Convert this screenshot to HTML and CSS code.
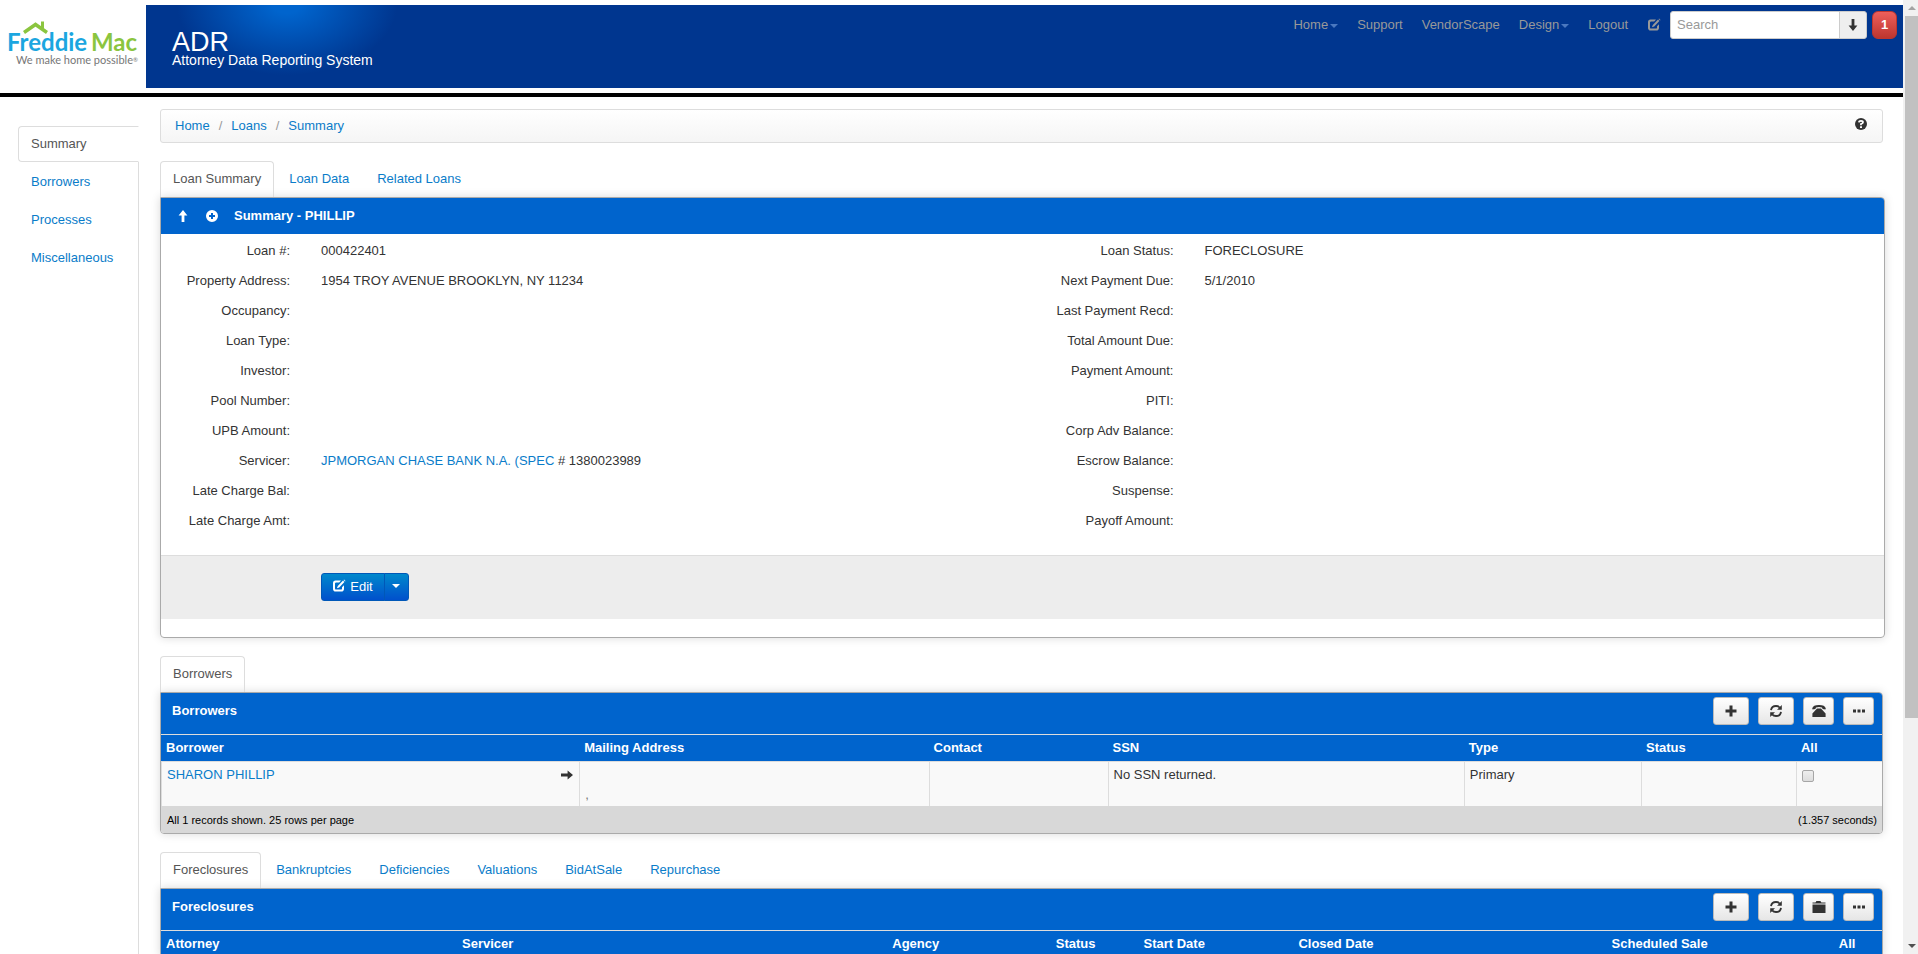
FILE: index.html
```html
<!DOCTYPE html>
<html lang="en">
<head>
    <meta charset="UTF-8">
    <meta name="viewport" content="width=device-width, initial-scale=1.0">
    <title>ADR - Attorney Data Reporting System</title>
    <link rel="stylesheet" href="styles.css">
</head>
<body>
    <!-- Icon sprite -->
    <svg class="sprite" aria-hidden="true">
        <symbol id="icon-edit" viewBox="0 0 14 14"><path fill="currentColor" d="M3.5 1.5H9L7.2 3.4H4.2Q3 3.4 3 4.6v4.8q0 1.2 1.2 1.2h4.6q1.2 0 1.2-1.2V8.2l2-2v3.6Q12 12.6 9.2 12.6H3.8Q1 12.6 1 9.8V4.2Q1 1.5 3.5 1.5zM11 1.6l1.4 1.4-5.2 5.4-2.3.9.9-2.4zM11.6 1l.5-.5 1.4 1.4-.5.5z"/></symbol>
        <symbol id="icon-down" viewBox="0 0 14 14"><path fill="currentColor" d="M5.6 1h2.8v6.6h3L7 13 2.6 7.6h3z"/></symbol>
        <symbol id="icon-up" viewBox="0 0 14 14"><path fill="currentColor" d="M5.6 13h2.8V6.4h3L7 1 2.6 6.4h3z"/></symbol>
        <symbol id="icon-right" viewBox="0 0 14 14"><path fill="currentColor" d="M1 5.6v2.8h6.6v3L13 7 7.6 2.6v3z"/></symbol>
        <symbol id="icon-plus-sign" viewBox="0 0 14 14"><path fill="currentColor" fill-rule="evenodd" d="M7 1a6 6 0 1 0 0 12A6 6 0 0 0 7 1zM6 4h2v2h2v2H8v2H6V8H4V6h2z"/></symbol>
        <symbol id="icon-question" viewBox="0 0 14 14"><circle cx="7" cy="7" r="6" fill="currentColor"/><path fill="none" stroke="#fff" stroke-width="1.8" d="M4.9 5.4Q5 3.8 7 3.8t2 1.5Q9 6.3 7 7v1.2"/><path fill="#fff" d="M6 9.2h2v1.7H6z"/></symbol>
        <symbol id="icon-plus" viewBox="0 0 14 14"><path fill="currentColor" d="M5.5 1.5h3v4h4v3h-4v4h-3v-4h-4v-3h4z"/></symbol>
        <symbol id="icon-refresh" viewBox="0 0 14 14"><path fill="none" stroke="currentColor" stroke-width="1.8" d="M2 6.2C2.4 3.6 4.6 2 7 2q2.4 0 3.9 1.7M12 7.8C11.6 10.4 9.4 12 7 12q-2.4 0-3.9-1.7"/><path fill="currentColor" d="M12.8 1v4.8H8zM1.2 13V8.2H6z"/></symbol>
        <symbol id="icon-phone" viewBox="0 0 14 14"><path fill="currentColor" d="M.2 4.4Q1 1 7 1t6.8 3.4l-.4 1-2.8-.3-.6-1.7Q7 2.6 4 3.4l-.6 1.7-2.8.3zM5 4.4h4l4.600 5V13H.4V9.400z"/></symbol>
        <symbol id="icon-folder" viewBox="0 0 14 14"><path fill="currentColor" d="M.5 3.500V2.400h3L4.400 1h4l1 1.400h4.100v1.100zM.5 4.500h13V13H.5z"/></symbol>
        <symbol id="icon-more" viewBox="0 0 14 14"><path fill="currentColor" d="M1 5.500h3v3H1zM5.500 5.500h3v3h-3zM10 5.500h3v3h-3z"/></symbol>
    </svg>

    <div class="window">
        <div class="page">
            <header class="header">
                <a href="#" class="logo" aria-label="Freddie Mac">
                    <svg width="146" height="83" viewBox="0 0 146 83">
                        <path d="M24 27.500l11.500-8 11.500 8" fill="none" stroke="#8bc53f" stroke-width="3.500"/>
                        <path d="M41 16.500h3v8l-3-2z" fill="#8bc53f"/>
                        <text x="7" y="46" class="logo-blue">Freddie</text>
                        <text x="91" y="46" class="logo-green">Mac</text>
                        <text x="16" y="59" class="logo-tag">We make home possible<tspan class="logo-reg" dy="-2">®</tspan></text>
                    </svg>
                </a>
                <div class="banner">
                    <div class="brand">
                        <h1>ADR</h1>
                        <p>Attorney Data Reporting System</p>
                    </div>
                    <nav class="topnav">
                        <a href="#">Home<span class="caret"></span></a>
                        <a href="#">Support</a>
                        <a href="#">VendorScape</a>
                        <a href="#">Design<span class="caret"></span></a>
                        <a href="#">Logout</a>
                        <a href="#" class="nav-icon" aria-label="Edit"><svg class="icon"><use href="#icon-edit"/></svg></a>
                        <form class="search">
                            <input type="text" placeholder="Search" aria-label="Search">
                            <button type="button" aria-label="Search options"><svg class="icon"><use href="#icon-down"/></svg></button>
                        </form>
                        <button type="button" class="alert-count">1</button>
                    </nav>
                </div>
            </header>

            <div class="layout">
                <ul class="side-tabs">
                    <li class="active"><a href="#">Summary</a></li>
                    <li><a href="#">Borrowers</a></li>
                    <li><a href="#">Processes</a></li>
                    <li><a href="#">Miscellaneous</a></li>
                </ul>

                <main class="main">
                    <div class="breadcrumb">
                        <a href="#">Home</a>
                        <span>/</span>
                        <a href="#">Loans</a>
                        <span>/</span>
                        <a href="#">Summary</a>
                        <svg class="icon help"><use href="#icon-question"/></svg>
                    </div>

                    <!-- Loan summary -->
                    <ul class="tabs">
                        <li class="active"><a href="#">Loan Summary</a></li>
                        <li><a href="#">Loan Data</a></li>
                        <li><a href="#">Related Loans</a></li>
                    </ul>
                    <section class="panel panel-summary">
                        <div class="summary-head">
                            <svg class="icon"><use href="#icon-up"/></svg>
                            <svg class="icon"><use href="#icon-plus-sign"/></svg>
                            <h2>Summary - PHILLIP</h2>
                        </div>
                        <div class="fields">
                            <dl>
                                <dt>Loan #:</dt><dd>000422401</dd>
                                <dt>Property Address:</dt><dd>1954 TROY AVENUE BROOKLYN, NY 11234</dd>
                                <dt>Occupancy:</dt><dd></dd>
                                <dt>Loan Type:</dt><dd></dd>
                                <dt>Investor:</dt><dd></dd>
                                <dt>Pool Number:</dt><dd></dd>
                                <dt>UPB Amount:</dt><dd></dd>
                                <dt>Servicer:</dt><dd><a href="#">JPMORGAN CHASE BANK N.A. (SPEC</a> # 1380023989</dd>
                                <dt>Late Charge Bal:</dt><dd></dd>
                                <dt>Late Charge Amt:</dt><dd></dd>
                            </dl>
                            <dl>
                                <dt>Loan Status:</dt><dd>FORECLOSURE</dd>
                                <dt>Next Payment Due:</dt><dd>5/1/2010</dd>
                                <dt>Last Payment Recd:</dt><dd></dd>
                                <dt>Total Amount Due:</dt><dd></dd>
                                <dt>Payment Amount:</dt><dd></dd>
                                <dt>PITI:</dt><dd></dd>
                                <dt>Corp Adv Balance:</dt><dd></dd>
                                <dt>Escrow Balance:</dt><dd></dd>
                                <dt>Suspense:</dt><dd></dd>
                                <dt>Payoff Amount:</dt><dd></dd>
                            </dl>
                        </div>
                        <div class="form-actions">
                            <button type="button" class="btn-primary btn-edit"><svg class="icon"><use href="#icon-edit"/></svg>Edit</button>
                            <button type="button" class="btn-primary btn-toggle" aria-label="More edit actions"><span class="caret"></span></button>
                        </div>
                    </section>

                    <!-- Borrowers -->
                    <ul class="tabs">
                        <li class="active"><a href="#">Borrowers</a></li>
                    </ul>
                    <section class="panel">
                        <div class="grid-head">
                            <h2>Borrowers</h2>
                            <div class="grid-tools">
                                <button type="button" class="btn btn-wide" aria-label="Add"><svg class="icon"><use href="#icon-plus"/></svg></button>
                                <button type="button" class="btn btn-wide" aria-label="Refresh"><svg class="icon"><use href="#icon-refresh"/></svg></button>
                                <button type="button" class="btn" aria-label="Contacts"><svg class="icon"><use href="#icon-phone"/></svg></button>
                                <button type="button" class="btn" aria-label="More"><svg class="icon"><use href="#icon-more"/></svg></button>
                            </div>
                        </div>
                        <table class="borrowers">
                            <thead>
                                <tr>
                                    <th>Borrower</th>
                                    <th>Mailing Address</th>
                                    <th>Contact</th>
                                    <th>SSN</th>
                                    <th>Type</th>
                                    <th>Status</th>
                                    <th>All</th>
                                </tr>
                            </thead>
                            <tbody>
                                <tr>
                                    <td>
                                        <div class="name-cell">
                                            <a href="#">SHARON PHILLIP</a>
                                            <svg class="icon"><use href="#icon-right"/></svg>
                                        </div>
                                    </td>
                                    <td class="address"><br>,</td>
                                    <td></td>
                                    <td>No SSN returned.</td>
                                    <td>Primary</td>
                                    <td></td>
                                    <td><input type="checkbox" aria-label="Select SHARON PHILLIP"></td>
                                </tr>
                            </tbody>
                        </table>
                        <div class="grid-foot">
                            <span>All 1 records shown. 25 rows per page</span>
                            <span>(1.357 seconds)</span>
                        </div>
                    </section>

                    <!-- Processes -->
                    <ul class="tabs">
                        <li class="active"><a href="#">Foreclosures</a></li>
                        <li><a href="#">Bankruptcies</a></li>
                        <li><a href="#">Deficiencies</a></li>
                        <li><a href="#">Valuations</a></li>
                        <li><a href="#">BidAtSale</a></li>
                        <li><a href="#">Repurchase</a></li>
                    </ul>
                    <section class="panel">
                        <div class="grid-head">
                            <h2>Foreclosures</h2>
                            <div class="grid-tools">
                                <button type="button" class="btn btn-wide" aria-label="Add"><svg class="icon"><use href="#icon-plus"/></svg></button>
                                <button type="button" class="btn btn-wide" aria-label="Refresh"><svg class="icon"><use href="#icon-refresh"/></svg></button>
                                <button type="button" class="btn" aria-label="Folder"><svg class="icon"><use href="#icon-folder"/></svg></button>
                                <button type="button" class="btn" aria-label="More"><svg class="icon"><use href="#icon-more"/></svg></button>
                            </div>
                        </div>
                        <table class="foreclosures">
                            <thead>
                                <tr>
                                    <th>Attorney</th>
                                    <th>Servicer</th>
                                    <th>Agency</th>
                                    <th>Status</th>
                                    <th>Start Date</th>
                                    <th>Closed Date</th>
                                    <th>Scheduled Sale</th>
                                    <th>All</th>
                                </tr>
                            </thead>
                        </table>
                    </section>
                </main>
            </div>
        </div>

        <div class="scrollbar" aria-hidden="true">
            <span class="arrow arrow-up"></span>
            <span class="thumb"></span>
            <span class="arrow arrow-down"></span>
        </div>
    </div>
</body>
</html>
```

FILE: styles.css
```css
* {
    box-sizing: border-box;
}
body {
    margin: 0;
    font-family: "Liberation Sans", Arial, sans-serif;
    font-size: 13px;
    line-height: 20px;
    color: #333;
    background: #fff;
}
h1, h2, p, ul, dl, dd {
    margin: 0;
    padding: 0;
}
ul {
    list-style: none;
}
a {
    color: #0a7cc9;
    text-decoration: none;
}
button, input {
    font-family: inherit;
    font-size: 13px;
    margin: 0;
}
button {
    cursor: pointer;
}
h2 {
    font-size: 13px;
    line-height: 20px;
}
.sprite {
    display: none;
}
.icon {
    display: block;
    flex: none;
    width: 14px;
    height: 14px;
}
.caret {
    display: inline-block;
    border: 4px solid transparent;
    border-top-color: currentColor;
    border-bottom: 0;
}
.window {
    display: flex;
    height: 100vh;
}
.page {
    flex: 1;
    min-width: 0;
    display: flex;
    flex-direction: column;
    overflow: hidden;
}

/* Header */
.header {
    display: flex;
    flex: none;
    padding: 5px 0;
    border-bottom: 4px solid #000;
}
.logo, .logo svg {
    display: block;
}
.logo-blue, .logo-green {
    font-family: Lato, sans-serif;
    font-size: 24px;
    font-weight: 700;
    fill: #1ba6e0;
}
.logo-green {
    fill: #8bc53f;
}
.logo-tag {
    font-family: Lato, sans-serif;
    font-size: 11px;
    fill: #777;
}
.logo-reg {
    font-size: 6px;
}
.banner {
    flex: 1;
    display: flex;
    justify-content: space-between;
    align-items: flex-start;
    background: radial-gradient(ellipse 110px 70px at 141px 0, #0064cd 12%, #00368f 100%) #00368f;
    color: #fff;
}
.brand {
    padding: 25px 0 0 26px;
}
.brand h1 {
    font-size: 27px;
    font-weight: normal;
    line-height: 24px;
}
.brand p {
    font-size: 14px;
    line-height: 12px;
}
.topnav {
    display: flex;
    align-items: center;
    padding: 6px 6px 0 0;
}
.topnav a {
    padding: 0 9px 0 10px;
    color: #999;
}
.topnav .caret {
    margin-left: 2px;
    vertical-align: middle;
    color: #4a78c0;
}
.search {
    display: flex;
    margin-right: 5px;
}
.search input {
    width: 170px;
    height: 28px;
    padding: 0 6px 2px;
    border: 1px solid #ccc;
    border-radius: 3px 0 0 3px;
    background: #fff;
}
.search input::placeholder {
    color: #999;
}
.search button {
    width: 28px;
    margin-left: -1px;
    padding: 0 6px;
    border: 1px solid #ccc;
    border-radius: 0 3px 3px 0;
    background: #eee;
    color: #333;
}
.alert-count {
    width: 25px;
    height: 28px;
    padding: 0 0 2px;
    border: 1px solid #bd362f;
    border-radius: 6px;
    background: linear-gradient(#ee5f5b, #bd362f);
    color: #fff;
    font-weight: bold;
}

/* Side navigation */
.layout {
    flex: 1 0 auto;
    display: flex;
}
.side-tabs {
    width: 121px;
    margin: 29px 21px 0 18px;
    border-right: 1px solid #ddd;
}
.side-tabs li {
    margin-bottom: 2px;
}
.side-tabs a {
    display: block;
    padding: 7px 12px;
    border: 1px solid transparent;
}
.side-tabs .active a {
    margin-right: -1px;
    border-color: #ddd;
    border-right-color: #fff;
    border-radius: 4px 0 0 4px;
    background: #fff;
    color: #555;
}

/* Main column */
.main {
    flex: 1;
    min-width: 0;
    padding: 12px 20px 0 0;
}
.breadcrumb {
    display: flex;
    align-items: center;
    gap: 9px;
    height: 34px;
    margin-bottom: 18px;
    padding: 0 14px;
    border: 1px solid #ddd;
    border-radius: 3px;
    background: linear-gradient(#fff, #f5f5f5);
}
.breadcrumb span {
    color: #999;
}
.breadcrumb .help {
    margin-left: auto;
    margin-bottom: 4px;
}
.tabs {
    display: flex;
    gap: 2px;
}
.tabs a {
    display: block;
    padding: 7px 12px 8px;
    border: 1px solid transparent;
    border-bottom: 0;
}
.tabs .active a {
    border-color: #ddd;
    border-radius: 4px 4px 0 0;
    color: #555;
}
.panel {
    margin-bottom: 18px;
    border: 1px solid #aaa;
    border-radius: 0 4px 4px 4px;
    box-shadow: 0 0 10px rgba(0,0,0,0.15);
    overflow: hidden;
}
.panel-summary {
    margin-right: -2px;
    padding-bottom: 18px;
}
.summary-head {
    display: flex;
    align-items: center;
    height: 36px;
    padding-left: 15px;
    background: #0064cd;
    color: #fff;
}
.summary-head .icon {
    margin-right: 15px;
}
.fields {
    display: grid;
    grid-template-columns: 1fr 1fr;
    gap: 44px;
    padding: 2px 0 19px;
}
.fields dl {
    display: grid;
    grid-template-columns: 129px 1fr;
    column-gap: 31px;
    grid-auto-rows: 30px;
    line-height: 30px;
}
.fields dt {
    text-align: right;
}
.form-actions {
    display: flex;
    padding: 17px 0 18px 160px;
    border-top: 1px solid #ddd;
    background: #ededed;
}
.btn-primary {
    display: flex;
    align-items: center;
    justify-content: center;
    gap: 4px;
    height: 28px;
    padding: 0 1px 2px 0;
    border: 1px solid #0058b8;
    background: linear-gradient(#0088cc, #0050cc);
    color: #fff;
}
.btn-edit {
    width: 64px;
    border-radius: 3px 0 0 3px;
}
.btn-toggle {
    width: 25px;
    margin-left: -1px;
    border-radius: 0 3px 3px 0;
}

/* Grids */
.grid-head {
    display: flex;
    justify-content: space-between;
    align-items: flex-start;
    padding: 4px 8px 9px 11px;
    background: #0064cd;
    color: #fff;
}
.grid-head h2 {
    padding-top: 4px;
}
.grid-tools {
    display: flex;
    gap: 9px;
}
.btn {
    display: flex;
    align-items: center;
    justify-content: center;
    width: 31px;
    height: 28px;
    padding: 0 0 1px;
    border: 1px solid #bbb;
    border-radius: 3px;
    background: linear-gradient(#fff, #e6e6e6);
    color: #333;
}
.btn-wide {
    width: 36px;
}
table {
    width: 100%;
    table-layout: fixed;
    border-collapse: separate;
    border-spacing: 0;
}
th {
    height: 27px;
    padding: 2px 5px;
    border-top: 1px solid #ddd;
    background: #0064cd;
    color: #fff;
    text-align: left;
}
td {
    height: 45px;
    padding: 3px 5px 1px;
    border-top: 1px solid #ddd;
    border-left: 1px solid #ddd;
    background: #f9f9f9;
    vertical-align: top;
}
.borrowers th:nth-child(1) { width: 24.3%; }
.borrowers th:nth-child(2) { width: 20.3%; }
.borrowers th:nth-child(3) { width: 10.4%; }
.borrowers th:nth-child(4) { width: 20.7%; }
.borrowers th:nth-child(5) { width: 10.3%; }
.borrowers th:nth-child(6) { width: 9%; }
.foreclosures th:nth-child(1) { width: 17.2%; }
.foreclosures th:nth-child(2) { width: 25%; }
.foreclosures th:nth-child(3) { width: 9.5%; }
.foreclosures th:nth-child(4) { width: 5.1%; }
.foreclosures th:nth-child(5) { width: 9%; }
.foreclosures th:nth-child(6) { width: 18.2%; }
.foreclosures th:nth-child(7) { width: 13.2%; }
.name-cell {
    display: flex;
    justify-content: space-between;
    align-items: center;
}
.address {
    color: #777;
}
td input[type="checkbox"] {
    display: block;
    width: 12px;
    height: 12px;
    margin-top: 5px;
    appearance: none;
    border: 1px solid #a6a6a6;
    border-radius: 2px;
    background: linear-gradient(#eee, #ddd);
}
.grid-foot {
    display: flex;
    justify-content: space-between;
    padding: 4px 5px 3px 6px;
    background: #d8d8d8;
    color: #000;
    font-size: 11px;
}

/* Scrollbar */
.scrollbar {
    flex: none;
    display: flex;
    flex-direction: column;
    align-items: center;
    width: 15px;
    padding: 6px 0 6px 2px;
    background: #f1f1f1;
}
.arrow {
    border: 4px solid transparent;
}
.arrow-up {
    border-top: 0;
    border-bottom-color: #a3a3a3;
    margin-bottom: 6px;
}
.thumb {
    flex: 0 0 74.5%;
    width: 100%;
    background: #c1c1c1;
}
.arrow-down {
    border-bottom: 0;
    border-top-color: #505050;
    margin-top: auto;
}
```
